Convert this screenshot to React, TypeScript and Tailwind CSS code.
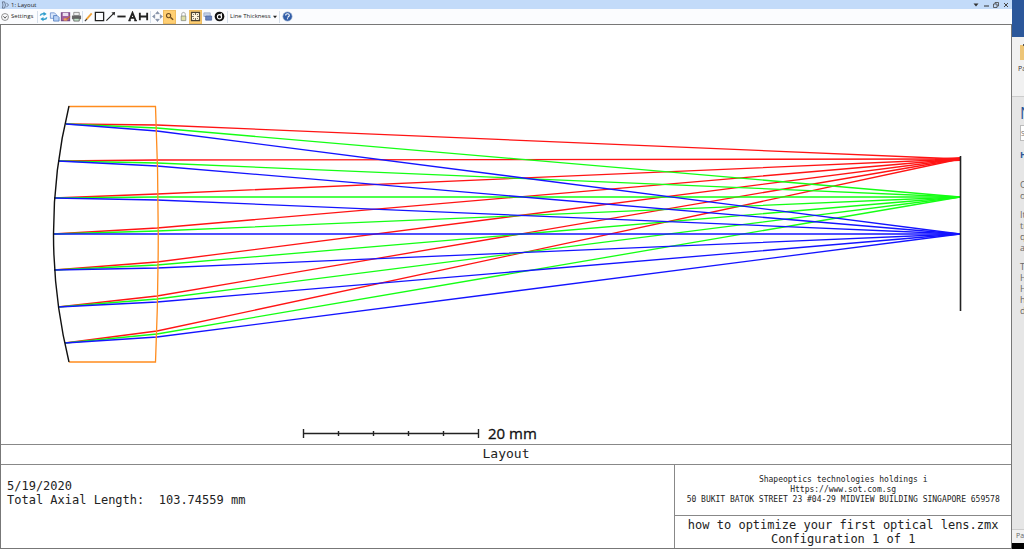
import type { ReactNode } from "react";

const STARTS = [
  [66, 124],
  [58, 161],
  [54, 198],
  [53, 234],
  [54, 270],
  [58, 307],
  [65, 343],
];

// one colour per field angle: where its rays leave the glass, and where they focus
const FIELDS = [
  { color: "#ff1414", exits: [125, 160, 194, 228, 262, 296, 331], focus: 159 },
  { color: "#14ff14", exits: [128, 163, 197, 231, 265, 299, 334], focus: 197 },
  { color: "#1414ff", exits: [131, 166, 200, 234, 268, 302, 337], focus: 234 },
];

function LensDrawing() {
  return (
    <svg viewBox="0 0 1010 419" className="block w-full" fill="none" aria-label="Lens layout">
      <g transform="translate(-1 -25)" strokeWidth="1.3">
        {FIELDS.map((f) =>
          STARTS.map(([x, y], i) => (
            <polyline key={f.color + i} points={`${x},${y} 157,${f.exits[i]} 960,${f.focus}`} stroke={f.color} />
          )),
        )}
        <path d="M69 106.5H155.5Q161 234 155.5 362H69" stroke="#ff8c1e" />
        <path d="M69 106Q38 234 69 362" stroke="#111" strokeWidth="1.4" />
        <path d="M935 158.5L960 157V161L935 162Z" fill="#ff1414" />
        <path d="M960.5 156V311" stroke="#222" strokeWidth="1.6" />
        <path
          d="M303.5 433.5H478.5M303.5 429V438M478.5 429V438M338.5 431V436M373.5 431V436M408.5 431V436M443.5 431V436"
          stroke="#222"
          strokeWidth="1.4"
        />
        <text x="488" y="439" fill="#111" stroke="#111" strokeWidth=".3" className="font-['Open_Sans',sans-serif] text-[15px]">
          20 mm
        </text>
      </g>
    </svg>
  );
}

function Tool({ label, active, children }: { label: string; active?: boolean; children: ReactNode }) {
  return (
    <button
      aria-label={label}
      className={`flex h-3 w-[11px] shrink-0 items-center justify-center ${active ? "bg-[#ffcf73] outline outline-[#efbd62]" : ""}`}
    >
      <svg viewBox="0 0 12 12" className="h-[11px] w-[11px]" fill="none" stroke="#222" strokeWidth="1.2">
        {children}
      </svg>
    </button>
  );
}

function Divider() {
  return <span className="h-3 w-px shrink-0 bg-[#d5dfeb]" />;
}

function Toolbar() {
  return (
    <div className="flex h-[15px] items-center bg-[#fbfcfe] font-['Open_Sans',sans-serif] text-[6px] text-[#222]">
      <button className="flex w-[37px] items-center gap-0.5 pl-px whitespace-nowrap">
        <svg viewBox="0 0 10 10" className="h-2 w-2 shrink-0" fill="none" stroke="#777">
          <circle cx="5" cy="5" r="4.3" />
          <path d="M3 4L5 6.5L7 4" stroke="#333" />
        </svg>
        Settings
      </button>
      <Divider />
      <div className="flex items-center">
        <Tool label="Refresh">
          <path d="M2.5 5Q3 2.5 6.5 3M9.500 7Q9 9.500 5.500 9" stroke="#2e9dcc" strokeWidth="1.6" />
          <path d="M6 .8L9.500 3.300L6 5.500ZM6 6.500L2.500 8.700L6 11.200Z" fill="#2e9dcc" stroke="none" />
        </Tool>
        <Tool label="Copy">
          <path d="M1.5 2H6L8 4V8H1.5Z" fill="#d7e5fa" stroke="#5c84c7" strokeWidth=".8" />
          <path d="M5 5H9L11 7V11H5Z" fill="#b7d0f4" stroke="#416fb8" strokeWidth=".8" />
        </Tool>
        <Tool label="Save">
          <path d="M1.5 2H10.500V10.500H1.500Z" fill="#a35f9e" stroke="#794a88" />
          <path d="M3 2H9V5.500H3Z" fill="#e9e0f0" stroke="none" />
          <path d="M4 8H8V10.500H4Z" fill="#f1a05a" stroke="none" />
          <path d="M7 9L11 6" stroke="#bc6c35" />
        </Tool>
        <Tool label="Print">
          <path d="M3 1.5H9V5H3Z" fill="#eee" stroke="#777" strokeWidth=".8" />
          <path d="M1 5H11V9H1Z" fill="#666" stroke="none" />
          <path d="M3 8H9V11H3Z" fill="#bfe1c7" stroke="#555" strokeWidth=".8" />
        </Tool>
      </div>
      <Divider />
      <div className="flex items-center">
        <Tool label="Pencil">
          <path d="M3.500 9.500L9.500 2.500" stroke="#f0a33a" strokeWidth="2" />
          <path d="M2 11L4 9" stroke="#333" />
        </Tool>
        <Tool label="Rectangle">
          <path d="M1.500 1.500H10.500V10.500H1.500Z" strokeWidth="1.400" />
        </Tool>
        <Tool label="Arrow">
          <path d="M1.500 10.500L9.500 2.500" />
          <path d="M7 1.500L11 1L10.500 5Z" fill="#222" stroke="none" />
        </Tool>
        <Tool label="Line">
          <path d="M1.500 6H10.500" strokeWidth="2" />
        </Tool>
        <Tool label="Text">
          <path d="M2.500 10.500L6 2L9.500 10.500M4 7.500H8" strokeWidth="2" />
          <path d="M1.500 10.500H4M8 10.500H10.800" />
        </Tool>
        <Tool label="Dimension">
          <path d="M2 2V10M10 2V10M2 6H10" strokeWidth="2" />
        </Tool>
      </div>
      <div className="flex items-center gap-px px-px">
        <Divider />
        <Tool label="Pan">
          <path d="M6 .5L8 3H4ZM6 11.500L8 9H4ZM.5 6L3 4V8ZM11.500 6L9 4V8Z" fill="#8794aa" stroke="#66758f" strokeWidth=".5" />
        </Tool>
        <Tool label="Zoom" active>
          <circle cx="5" cy="5" r="2.300" stroke="#704d20" />
          <path d="M7 7L10 9.500" stroke="#704d20" strokeWidth="1.600" />
        </Tool>
      </div>
      <div className="ml-0.5 flex items-center gap-px">
        <Tool label="Lock">
          <path d="M4 6V3Q6 0 8 3V6" stroke="#bbb" />
          <path d="M3.500 5.500H8.500V10.500H3.500Z" fill="#e0dfa7" stroke="#808575" strokeWidth=".8" />
        </Tool>
        <Tool label="Fit" active>
          <path d="M1.500 1.500H10.500V10.500H1.500Z" fill="#fff5de" stroke="#4a4030" />
          <path d="M6 2.500V4M6 8V9.500M2.500 6H4M8 6H9.500" stroke="#4a4030" />
          <path d="M3 3L4.300 4.300M9 3L7.700 4.300M3 9L4.300 7.700M9 9L7.700 7.700" stroke="#4a4030" strokeWidth=".8" />
        </Tool>
        <Tool label="Windows">
          <path d="M2 2H9V6H2Z" fill="#c3d0e8" stroke="#93a3c0" strokeWidth=".8" />
          <path d="M4 5.500H10.500V10H4Z" fill="#6a85c0" stroke="#4a629a" strokeWidth=".8" />
        </Tool>
        <Tool label="Rotate">
          <circle cx="6" cy="6" r="5.300" fill="#111" stroke="none" />
          <circle cx="6" cy="6.300" r="2.300" stroke="#fff" />
          <path d="M8 2.500V6.500" stroke="#fff" />
        </Tool>
      </div>
      <div className="ml-0.5 flex items-center gap-0.5">
        <Divider />
        <button className="flex items-center gap-0.5 whitespace-nowrap">
          Line Thickness
          <svg viewBox="0 0 6 6" className="h-1 w-1">
            <path d="M0 1H6L3 5Z" fill="#222" />
          </svg>
        </button>
        <Divider />
        <Tool label="Help">
          <circle cx="6" cy="6" r="5" fill="#315da8" stroke="#8ba2c6" strokeWidth=".7" />
          <path d="M4 5Q4 3 6 3T8 5Q8 6 6 7M6 8V9" stroke="#fff" />
        </Tool>
      </div>
    </div>
  );
}

function TitleBar() {
  return (
    <header className="flex h-[9px] items-center justify-between bg-[#c3dbf9] font-['Open_Sans',sans-serif] text-[6px] leading-none text-[#222]">
      <div className="flex items-center gap-0.5 pl-px">
        <svg viewBox="0 0 9 9" className="h-2 w-2" fill="none" stroke="#607087">
          <path d="M1.500 1H4Q6 4.500 4 8H1.500Q3 4.500 1.500 1ZM6 2L8.500 4.500L6 7" />
        </svg>
        <h1>1: Layout</h1>
      </div>
      <div className="flex items-center gap-1 pr-[3px]">
        <button aria-label="Menu">
          <svg viewBox="0 0 6 6" className="h-1.5 w-1.5">
            <path d="M.5 1.500H5.500L3 4.500Z" fill="#333" />
          </svg>
        </button>
        <button aria-label="Minimize">
          <svg viewBox="0 0 6 6" className="h-1.5 w-1.5">
            <path d="M1 4H6" stroke="#333" />
          </svg>
        </button>
        <button aria-label="Restore">
          <svg viewBox="0 0 6 6" className="h-1.5 w-1.5" fill="none" stroke="#444" strokeWidth=".8">
            <path d="M.5 2H4V5.500H.5ZM2 2V.5H5.500V4H4" />
          </svg>
        </button>
        <button aria-label="Close">
          <svg viewBox="0 0 6 6" className="h-1.5 w-1.5">
            <path d="M1 1L5 5M5 1L1 5" stroke="#444" />
          </svg>
        </button>
      </div>
    </header>
  );
}

// the edge of the Word window sitting behind the layout window
function DocumentEdge() {
  return (
    <aside className="flex w-3 shrink-0 flex-col overflow-hidden bg-[#e6e6e6] font-['Open_Sans',sans-serif] text-[9px] whitespace-nowrap text-[#666]">
      <div className="h-[37px] shrink-0 bg-[#2b579a]" />
      <div className="h-[60px] shrink-0 border-b border-[#ccc] bg-[#f1f1f1] pt-1.5">
        <svg viewBox="0 0 12 16" className="ml-2 h-[18px] w-3">
          <path d="M0 1H12V16H0Z" fill="#edc577" />
          <path d="M3 0H12V2H3Z" fill="#555" />
        </svg>
        <p className="pl-1.5 text-[7px] leading-4 text-[#333]">Pa</p>
      </div>
      <div className="pl-2">
        <h2 className="mt-1 text-[16px] leading-6 text-[#2b579a]">N</h2>
        <input aria-label="Search document" defaultValue="S" className="block h-4 w-24 border border-[#bbb] bg-white text-[7px]" />
        <p className="mt-1 leading-5 font-bold text-[#2b579a]">H</p>
        <div className="mt-3.5 leading-[11px]">
          <p>C<br />o</p>
          <p className="mt-2">It<br />tr<br />q<br />a</p>
          <p className="mt-2">T<br />H<br />H<br />h<br />d</p>
        </div>
      </div>
      <div className="mt-auto h-[14px] shrink-0 border-t border-[#ccc] bg-[#f1f1f1] pl-1 text-[7px] leading-3">Pa</div>
      <div className="h-[6px] shrink-0 bg-black" />
    </aside>
  );
}

export default function App() {
  return (
    <div className="flex min-h-screen bg-white">
      <div className="flex min-w-0 flex-1 flex-col">
        <TitleBar />
        <Toolbar />
        <main className="flex flex-1 flex-col border border-[#777] bg-white font-['DejaVu_Sans_Mono',monospace] text-[12px] leading-[14px] text-[#222]">
          <LensDrawing />
          <h2 className="h-[21px] border-y border-[#888] text-center text-[13px] leading-[18px]">Layout</h2>
          <div className="flex flex-1">
            <div className="flex-1 pt-3.5 pl-1.5 whitespace-pre">
              <p>5/19/2020</p>
              <p>{"Total Axial Length:  103.74559 mm"}</p>
            </div>
            <div className="flex w-1/3 flex-col border-l border-[#888] text-center whitespace-nowrap">
              <div className="flex flex-1 flex-col justify-center text-[8px] leading-[10px]">
                <p>Shapeoptics technologies holdings i</p>
                <p>Https://www.sot.com.sg</p>
                <p>50 BUKIT BATOK STREET 23 #04-29 MIDVIEW BUILDING SINGAPORE 659578</p>
              </div>
              <div className="h-[33px] border-t border-[#888] pt-0.5">
                <p>how to optimize your first optical lens.zmx</p>
                <p>Configuration 1 of 1</p>
              </div>
            </div>
          </div>
        </main>
      </div>
      <DocumentEdge />
    </div>
  );
}
